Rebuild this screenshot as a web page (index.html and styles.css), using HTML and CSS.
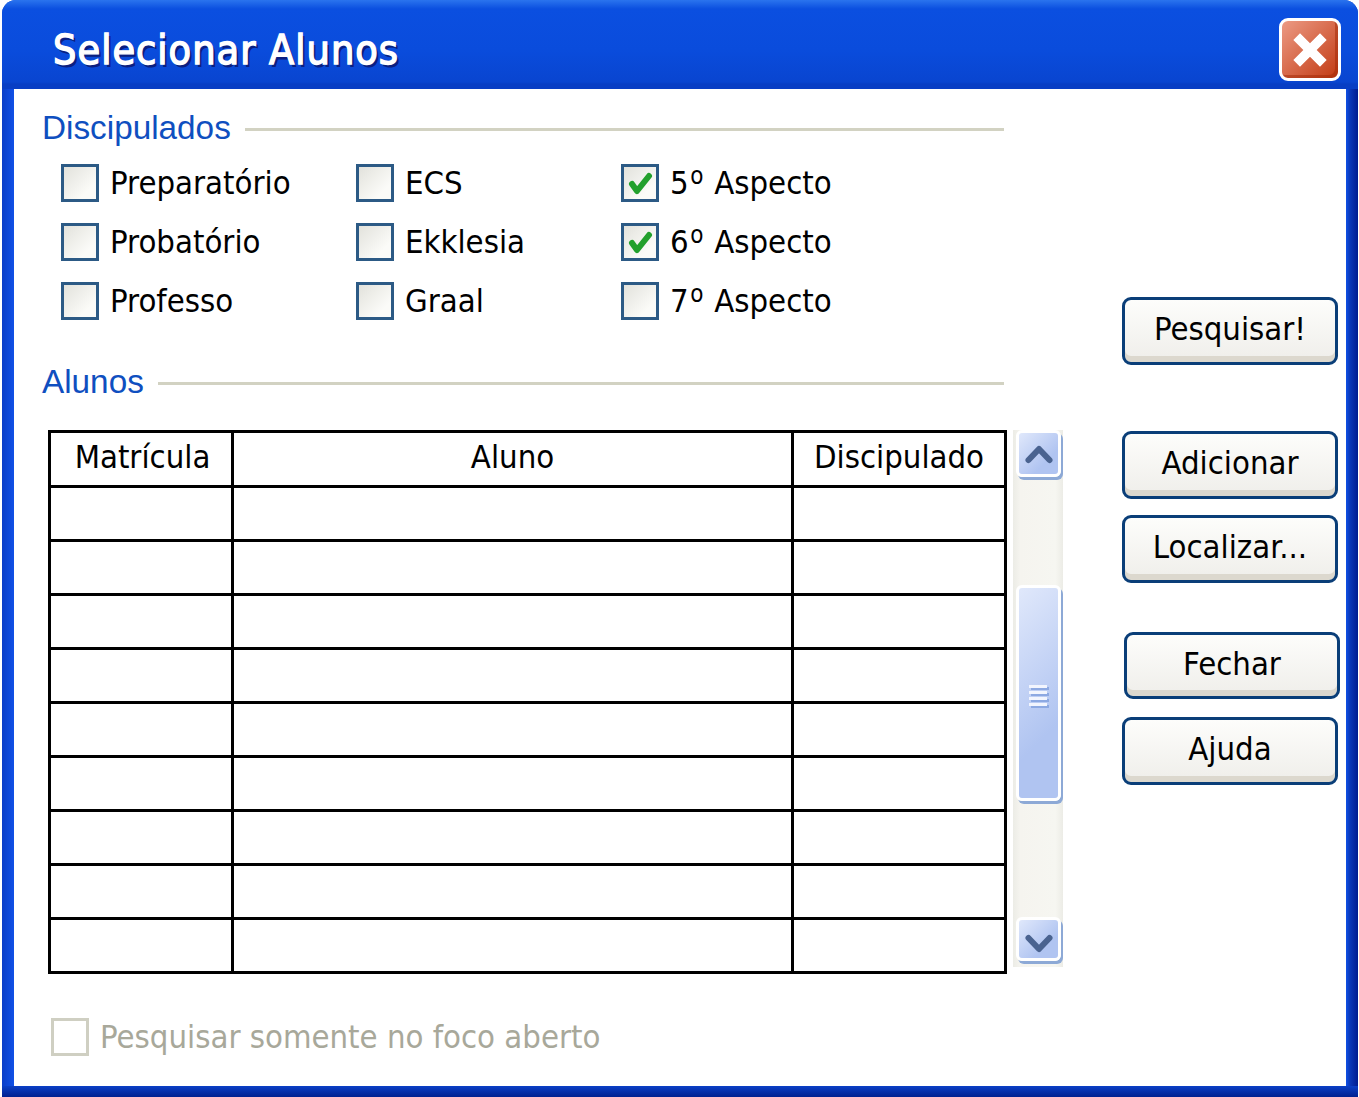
FILE: index.html
```html
<!DOCTYPE html>
<html lang="pt">
<head>
<meta charset="utf-8">
<title>Selecionar Alunos</title>
<link rel="stylesheet" href="styles.css">
</head>
<body>
<div class="window">
  <header class="titlebar">
    <h1 class="title">Selecionar Alunos</h1>
    <button class="close" aria-label="Fechar">
      <svg width="40" height="40" viewBox="0 0 36 36"><path d="M3 9 9 3l9 9 9-9 6 6-9 9 9 9-6 6-9-9-9 9-6-6 9-9z" fill="#fff"/></svg>
    </button>
  </header>
  <div class="client">
    <main class="left">
      <div class="legend"><span class="legend-text">Discipulados</span><span class="legend-line"></span></div>
      <div class="checks">
        <label class="check"><span class="box"></span>Preparatório</label>
        <label class="check"><span class="box"></span>ECS</label>
        <label class="check"><span class="box"><svg class="tick" width="32" height="32" viewBox="0 0 32 32"><path d="M8 17l5 7L25 9" fill="none" stroke="#22a02c" stroke-width="6" stroke-linecap="round" stroke-linejoin="round"/></svg></span><span>5<span class="ord">o</span> Aspecto</span></label>
        <label class="check"><span class="box"></span>Probatório</label>
        <label class="check"><span class="box"></span>Ekklesia</label>
        <label class="check"><span class="box"><svg class="tick" width="32" height="32" viewBox="0 0 32 32"><path d="M8 17l5 7L25 9" fill="none" stroke="#22a02c" stroke-width="6" stroke-linecap="round" stroke-linejoin="round"/></svg></span><span>6<span class="ord">o</span> Aspecto</span></label>
        <label class="check"><span class="box"></span>Professo</label>
        <label class="check"><span class="box"></span>Graal</label>
        <label class="check"><span class="box"></span><span>7<span class="ord">o</span> Aspecto</span></label>
      </div>
      <div class="legend legend-alunos"><span class="legend-text">Alunos</span><span class="legend-line"></span></div>
      <div class="list-row">
        <table class="grid">
          <thead><tr><th class="c1">Matrícula</th><th class="c2">Aluno</th><th class="c3">Discipulado</th></tr></thead>
          <tbody>
            <tr><td></td><td></td><td></td></tr>
            <tr><td></td><td></td><td></td></tr>
            <tr><td></td><td></td><td></td></tr>
            <tr><td></td><td></td><td></td></tr>
            <tr><td></td><td></td><td></td></tr>
            <tr><td></td><td></td><td></td></tr>
            <tr><td></td><td></td><td></td></tr>
            <tr><td></td><td></td><td></td></tr>
            <tr><td></td><td></td><td></td></tr>
          </tbody>
        </table>
        <div class="scrollbar">
          <div class="sb-btn sb-up"><svg width="30" height="24" viewBox="0 0 30 24"><path d="M4.5 18 15 7l10.5 11" fill="none" stroke="#4a6390" stroke-width="6" stroke-linecap="round" stroke-linejoin="round"/></svg></div>
          <div class="sb-thumb"><span class="grip"></span><span class="grip"></span><span class="grip"></span><span class="grip"></span></div>
          <div class="sb-btn sb-down"><svg width="30" height="24" viewBox="0 0 30 24"><path d="M4.5 6 15 17 25.5 6" fill="none" stroke="#4a6390" stroke-width="6" stroke-linecap="round" stroke-linejoin="round"/></svg></div>
        </div>
      </div>
      <label class="check disabled"><span class="box"></span>Pesquisar somente no foco aberto</label>
    </main>
    <aside class="actions">
      <button class="btn">Pesquisar!</button>
      <button class="btn btn-add">Adicionar</button>
      <button class="btn btn-find">Localizar...</button>
      <button class="btn btn-close">Fechar</button>
      <button class="btn btn-help">Ajuda</button>
    </aside>
  </div>
</div>
</body>
</html>
```

FILE: styles.css
```css
* { box-sizing: border-box; }
html, body { margin: 0; padding: 0; background: #fff; }
body { width: 1359px; height: 1097px; overflow: hidden; font-family: "DejaVu Sans Condensed", "DejaVu Sans", sans-serif; color: #000; }

.window {
  width: 1356px;
  height: 1097px;
  margin-left: 2px;
  display: flex;
  flex-direction: column;
  border-radius: 14px 14px 0 0;
  overflow: hidden;
  background: linear-gradient(90deg, #0a3ec8 0, #1050e6 12px, #1050e6 1344px, #0a38b8 1348px, #001c90 1356px);
}
.window::after {
  content: "";
  height: 11px;
  flex: none;
  background: linear-gradient(#0a3fc6, #00208f);
}
.titlebar {
  height: 89px;
  flex: none;
  display: flex;
  align-items: flex-start;
  justify-content: space-between;
  padding: 18px 17px 0 51px;
  background: linear-gradient(#2a74ee 0, #0b4fe0 9px, #0a4cdc 50px, #0945d0 82px, #083ec4 84px, #083ec4 89px);
}
.title {
  margin: 6px 0 0;
  font-size: 41px;
  line-height: 52px;
  font-weight: 400;
  letter-spacing: 1px;
  color: #fff;
  -webkit-text-stroke: 1.4px #fff;
  text-shadow: 2.5px 2.5px 0 #0b1f80;
}
.close {
  width: 62px;
  height: 63px;
  padding: 0;
  display: flex;
  align-items: center;
  justify-content: center;
  border: 3px solid #fff;
  border-radius: 9px;
  background: linear-gradient(135deg, #ec9a84, #c23a12);
  box-shadow: inset -3px -3px 0 rgba(160, 40, 5, .5);
}
.client {
  flex: none;
  height: 997px;
  margin: 0 12px;
  display: flex;
  background: #fff;
}

.left { width: 1050px; flex: none; padding: 20px 0 0 29px; }
.legend { width: 961px; height: 38px; display: flex; align-items: center; gap: 14px; }
.legend-text { margin-left: -1px; font-family: "Liberation Sans", Arial, sans-serif; font-size: 33.3px; color: #0f4fc0; white-space: nowrap; }
.legend-line { flex: 1; height: 3px; margin-top: 2px; background: #d2d2c2; }
.legend-alunos { margin-top: 43px; }

.checks {
  margin: 17px 0 0 18px;
  display: grid;
  grid-template-columns: 295px 265px auto;
  grid-auto-rows: 38px;
  row-gap: 21px;
}
.check { display: flex; align-items: center; gap: 11px; font-size: 32.6px; line-height: 38px; white-space: nowrap; }
.ord { font-size: 24px; line-height: 0; position: relative; top: -10px; margin: 0 1.5px; }
.box {
  width: 38px;
  height: 38px;
  flex: none;
  display: flex;
  align-items: center;
  justify-content: center;
  border: 3px solid #2c5a85;
  background: linear-gradient(135deg, #e2e2dc, #fbfbf8 75%);
}
.disabled { margin: 44px 0 0 8px; color: #a8a89a; }
.disabled .box { border-color: #cfcfc2; background: #fff; }

.list-row { margin: 29px 0 0 5px; display: flex; align-items: flex-start; gap: 6px; }
.grid {
  width: 959px;
  flex: none;
  border-collapse: collapse;
  table-layout: fixed;
  border: 3px solid #000;
}
.grid th, .grid td { border: 3px solid #000; padding: 0; height: 54px; }
.grid th { height: 55px; padding-bottom: 4px; font-weight: 400; font-size: 32.6px; }
.grid .c1 { width: 183px; padding-left: 3px; }
.c2 { width: 560px; }

.scrollbar {
  width: 50px;
  height: 537px;
  flex: none;
  display: flex;
  flex-direction: column;
  padding: 0 0 0 3px;
  background: linear-gradient(90deg, #ecece6, #f5f4ef 15%, #f6f6f1 85%, #ecece6);
}
.sb-btn, .sb-thumb {
  width: 45px;
  flex: none;
  border: 3px solid #fff;
  border-radius: 6px;
  background: linear-gradient(135deg, #e0e8fb, #b0c4f1 70%);
  box-shadow: 2px 3px 0 #8da9d6;
}
.sb-btn { height: 47px; display: flex; align-items: center; justify-content: center; }
.sb-thumb {
  height: 216px;
  margin-top: 108px;
  padding-top: 5px;
  display: flex;
  flex-direction: column;
  align-items: center;
  justify-content: center;
  gap: 3px;
}
.sb-down { height: 44px; margin-top: auto; margin-bottom: 6px; padding-top: 9px; }
.grip { width: 18px; height: 3px; margin-left: -1px; background: #f2f5fe; box-shadow: 2px 2px 0 #8da9e2; }

.actions { flex: 1; display: flex; flex-direction: column; align-items: flex-start; padding: 208px 0 0 58px; }
.btn {
  width: 216px;
  height: 68px;
  flex: none;
  padding: 0 0 4px;
  font: inherit;
  font-size: 32.6px;
  color: #000;
  border: 3px solid #0a3e78;
  border-radius: 9px;
  background: linear-gradient(#fdfdfb, #efeeea);
  box-shadow: inset 0 -6px 0 #dcd8ce;
}
.btn-add { margin-top: 66px; }
.btn-find { margin-top: 16px; }
.btn-close { margin: 49px 0 0 2px; height: 67px; }
.btn-help { margin-top: 18px; }
```
